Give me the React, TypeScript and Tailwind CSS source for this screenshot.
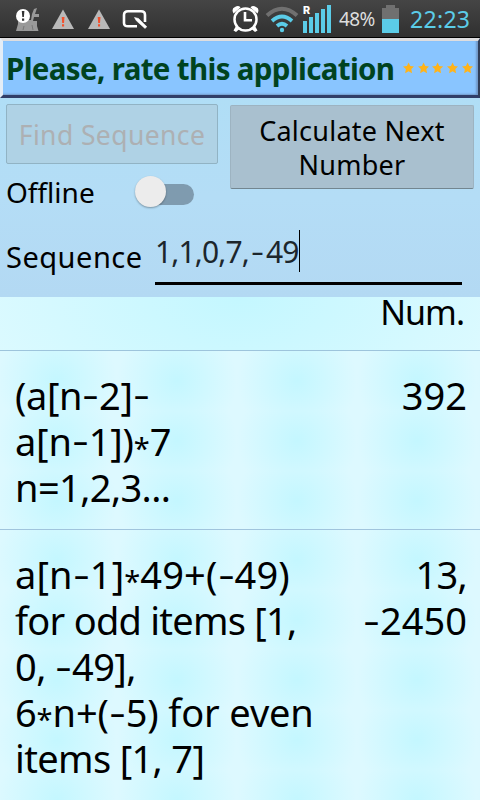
import React from "react";

type LineProps = { text: string; spacing?: number };

// Formula text uses a wide minus sign and an asterisk centred at mid height.
function Line({ text, spacing = 0 }: LineProps) {
  return (
    <div className="whitespace-pre" style={{ letterSpacing: `${spacing}px` }}>
      {text.split(/([*-])/).map((part, i) => {
        if (part === "-")
          return (
            <span key={i} className="relative -top-px inline-block w-[17px] origin-center scale-x-[1.35] scale-y-90 text-center leading-none tracking-normal">
              -
            </span>
          );
        if (part === "*")
          return (
            <span key={i} className="relative top-[3px] inline-block w-[16px] text-center text-[29px] leading-none tracking-normal">
              *
            </span>
          );
        return <React.Fragment key={i}>{part}</React.Fragment>;
      })}
    </div>
  );
}

function Warning() {
  return (
    <svg width="24" height="22" viewBox="0 0 24 22">
      <path d="M12 1.500 23 21H1Z" fill="#b9b9b9" />
      <path d="M10.700 9h2.800l-.5 6h-1.800zM11 16.300h2.100v2.200H11z" fill="#f4502c" />
    </svg>
  );
}

function StatusBar() {
  return (
    <div className="flex h-[38px] shrink-0 items-start border-b border-black bg-gradient-to-b from-[#454545] to-[#303030]">
      <svg className="ml-[15px] mt-[7px]" width="26" height="25" viewBox="0 0 26 25">
        <path d="M3 13h13l1-6 2-5 3-1-2 6h4v3h-5l-1 4h4v5l1.500 5H1l2-7z" fill="#999" />
        <path d="M9 19l-1 4M17 18l1 5" stroke="#777" strokeWidth="1" />
        <circle cx="8" cy="9" r="7" fill="#fff" />
        <path d="M6.800 4h2.600l-.5 6H7.300zM7 11.500h2.200v2.200H7z" fill="#333" />
      </svg>
      <div className="ml-[10px] mt-[8px] flex gap-[12px]">
        <Warning />
        <Warning />
      </div>
      <svg className="ml-[11px] mt-[9px]" width="28" height="22" viewBox="0 0 28 22">
        <path d="M15 17.300H6Q2 17.300 2 14V6Q2 2.300 6 2.300H19Q23 2.300 23 6V13" fill="none" stroke="#fff" strokeWidth="2.600" />
        <path d="M12.500 8.500l4 1 8.300 8.200-1.800 1.700-8.600-7.600z" fill="#fff" stroke="#fff" strokeWidth=".6" />
      </svg>
      <svg className="ml-[81px] mt-[4px]" width="29" height="29" viewBox="0 0 29 29">
        <circle cx="14.500" cy="15.500" r="11" fill="none" stroke="#fff" strokeWidth="2.500" />
        <path d="M2.500 9.500Q0 4.500 4 3Q7.500 1 9.500 3.500ZM26.500 9.500Q29 4.500 25 3Q21.500 1 19.500 3.500ZM5 22l3.500 3-3.500 3-2.500-1.500zM24 22l-3.500 3 3.500 3 2.500-1.500z" fill="#fff" />
        <path d="M14 8v8.300h7" fill="none" stroke="#fff" strokeWidth="2.600" />
      </svg>
      <svg className="ml-[5px] mt-[5px]" width="34" height="28" viewBox="0 0 34 28" fill="none" strokeWidth="4">
        <path d="M2 10.500Q17-3 32 10.500" stroke="#707070" />
        <path d="M7 16Q17 7 27 16M12 21Q17 16.500 22 21" stroke="#5bcce8" strokeWidth="3.700" />
        <circle cx="17" cy="25" r="2.200" fill="#5bcce8" />
      </svg>
      <div className="ml-[4px] mt-[5px] flex h-[28px] w-[28px] items-end gap-[2px]">
        <div className="relative h-[12px] w-[4px] bg-[#5bcce8]">
          <span className="absolute -top-[17px] left-0 font-['Roboto',sans-serif] text-[11px] font-black leading-[14px] text-white">R</span>
        </div>
        <div className="h-[16px] w-[4px] bg-[#5bcce8]" />
        <div className="h-[20px] w-[4px] bg-[#5bcce8]" />
        <div className="h-[24px] w-[4px] bg-[#5bcce8]" />
        <div className="h-[28px] w-[4px] bg-[#5bcce8]" />
      </div>
      <span className="ml-[8px] mt-[5px] w-[37px] whitespace-nowrap font-['Noto_Sans',sans-serif] text-[19px] leading-[28px] tracking-[-0.6px] text-[#dedede]">48%</span>
      <div className="ml-[6px] mt-[5px] flex w-[17px] flex-col items-center">
        <div className="h-[3px] w-[9px] bg-[#707070]" />
        <div className="h-[11px] w-[17px] bg-[#707070]" />
        <div className="h-[14px] w-[17px] bg-[#5bcce8]" />
      </div>
      <span className="ml-[11px] mt-[4px] whitespace-nowrap font-['Noto_Sans',sans-serif] text-[23px] leading-[31px] tracking-[0.3px] text-[#5bcce8]">22:23</span>
    </div>
  );
}

function RateBanner() {
  return (
    <div className="flex h-[60px] shrink-0 items-start overflow-hidden border-b-[3px] border-l-[3px] border-r-[2px] border-t-[3px] border-b-[#303e68] border-l-[#e4edf6] border-r-[#303e58] border-t-[#dddddf] bg-[#89c5ff] pl-[3px] pt-[6px] shadow-[inset_-2px_-1px_2px_#7198c8]">
      <span className="w-[397px] whitespace-nowrap text-[29.500px] font-bold leading-[44px] tracking-[-0.65px] text-[#00431f]">Please, rate this application</span>
      <div className="mt-[15px] flex gap-[3.500px]">
        {[0, 1, 2, 3, 4].map((i) => (
          <svg key={i} className="shrink-0" width="11.200" height="12" viewBox="0 0 12 12">
            <path d="M6 0l1.800 3.800 4.200.5-3.100 2.900.8 4.300L6 9.500l-3.700 2 .8-4.300L0 4.300l4.200-.5z" fill="#ffb319" />
          </svg>
        ))}
      </div>
    </div>
  );
}

export default function App() {
  return (
    <div className="flex h-[800px] w-[480px] flex-col overflow-hidden bg-[#ddf9ff] font-['Noto_Sans',sans-serif] text-black">
      <StatusBar />
      <RateBanner />
      <section className="h-[199px] shrink-0 bg-gradient-to-b from-[#b0def6] via-[#b4ddf6] to-[#b3d9f3]">
        <div className="flex items-start pl-[6px] pt-[6px]">
          <div className="w-[212px]">
            <button className="block h-[60px] w-[212px] whitespace-nowrap rounded-[2px] border border-[#91b3c4] bg-[#afd2e5] text-[26.500px] leading-[60px] tracking-[0.400px] text-[#adb0b3]">Find Sequence</button>
            <div className="flex h-[56px] items-start">
              <span className="w-[129px] text-[28px] leading-[56px]">Offline</span>
              <div className="mt-[20px] flex h-[21px] w-[59px] items-start rounded-full bg-gradient-to-r from-transparent from-30% to-[#7f9baf] to-30%">
                <div className="-mt-[8px] h-[31px] w-[31px] shrink-0 rounded-full bg-[#ececec] shadow-[0_1px_2px_#0005]" />
              </div>
            </div>
          </div>
          <button className="ml-[12px] mt-[1px] h-[84px] w-[244px] rounded-[2px] border border-[#9db3c1] border-b-[#738690] bg-[#a9c0cf] pt-[1px] text-[27px] leading-[34px] tracking-[0.250px]">
            Calculate Next<br />Number
          </button>
        </div>
        <div className="flex h-[64px] items-start">
          <label className="ml-[6px] mt-[12px] w-[149px] whitespace-nowrap text-[29px] leading-[50px] tracking-[0.500px]">Sequence</label>
          <div className="mt-[8px] flex h-[57px] w-[307px] items-start border-b-[3px] border-black">
            <span className="whitespace-nowrap text-[30px] leading-[48px] text-[#1c262c]"><Line text="1,1,0,7,-49" spacing={-0.85} /></span>
            <span className="mt-[2px] h-[42px] w-px bg-black" />
          </div>
        </div>
      </section>
      <header className="h-[54px] shrink-0 border-b border-[#9dc4dc] bg-[radial-gradient(ellipse_280px_160px_at_240px_0px,#c4f7ff,#ddfaff)] pr-[16px] text-right text-[34px] leading-[31px] tracking-[-1px]">
        Num.
      </header>
      <section className="flex h-[179px] shrink-0 justify-between border-b border-[#a0c4dd] bg-[radial-gradient(ellipse_60px_60px_at_50%_50%,#c4f7ff,#ddf9ff)] bg-[length:120px_60px] bg-[position:-3px_0px] pl-[15px] pr-[13px] pt-[21px] text-[38px] leading-[46px]">
        <div>
          <Line text="(a[n-2]-" spacing={-0.4} />
          <Line text="a[n-1])*7" spacing={-0.2} />
          <Line text="n=1,2,3..." spacing={-0.6} />
        </div>
        <div className="text-right"><Line text="392" /></div>
      </section>
      <section className="flex h-[300px] shrink-0 justify-between bg-[radial-gradient(ellipse_60px_60px_at_50%_50%,#c4f7ff,#ddf9ff)] bg-[length:120px_60px] bg-[position:-3px_0px] pl-[15px] pr-[13px] pt-[21px] text-[38px] leading-[46px]">
        <div>
          <Line text="a[n-1]*49+(-49)" spacing={0.15} />
          <Line text="for odd items [1," spacing={-0.75} />
          <Line text="0, -49]," spacing={-0.6} />
          <Line text="6*n+(-5) for even" spacing={-0.15} />
          <Line text="items [1, 7]" spacing={-0.65} />
        </div>
        <div className="text-right">
          <Line text="13," spacing={-0.7} />
          <Line text="-2450" />
        </div>
      </section>
    </div>
  );
}
